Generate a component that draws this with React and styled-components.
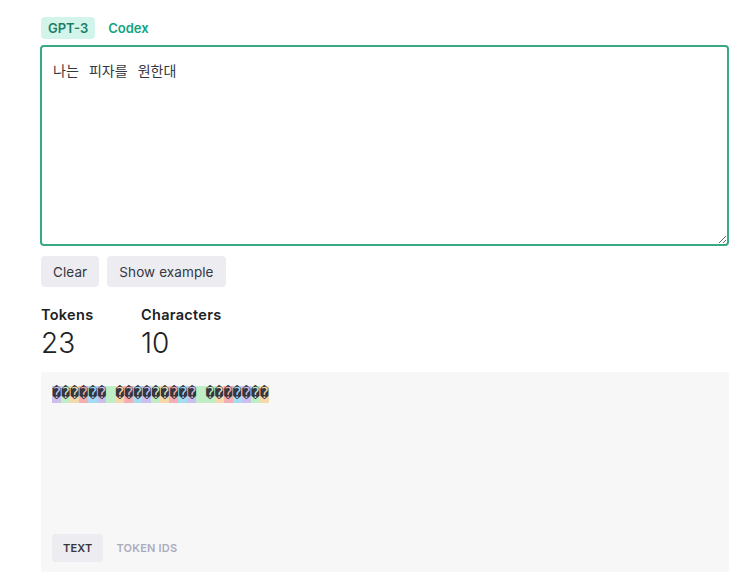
import React from "react";
import styled, { createGlobalStyle } from "styled-components";

const COLORS = {
  green: "#10a37f",
  greenTint: "#d2f4ea",
  text: "#353740",
  muted: "#acacbe",
  gray: "#ececf1",
  panel: "#f7f7f8",
};

const TOKEN_COLORS = [
  "rgba(107, 64, 216, 0.3)",
  "rgba(104, 222, 122, 0.4)",
  "rgba(244, 172, 54, 0.4)",
  "rgba(239, 65, 70, 0.4)",
  "rgba(39, 181, 234, 0.4)",
];

const R = "\uFFFD";
const TOKENS = [
  R, R, R, R, R, R, " ",
  R, R, R, R, R, R, R, R, R,
  " " + R, R, R, R, R, R, R,
];

const GlobalStyle = createGlobalStyle`
  body {
    margin: 0;
    background: #fff;
    font-family: Inter, "Noto Sans", sans-serif;
    color: ${COLORS.text};
  }
`;

const App = () => {
  return (
    <>
      <GlobalStyle />
      <Page>
        <Tabs>
          <ModelTab $active>GPT-3</ModelTab>
          <ModelTab>Codex</ModelTab>
        </Tabs>
        <Input defaultValue="나는 피자를 원한대" spellCheck={false} />
        <Actions>
          <Button>Clear</Button>
          <Button>Show example</Button>
        </Actions>
        <Stats>
          <Stat>
            <StatLabel>Tokens</StatLabel>
            <StatValue>23</StatValue>
          </Stat>
          <Stat>
            <StatLabel>Characters</StatLabel>
            <StatValue>10</StatValue>
          </Stat>
        </Stats>
        <Output>
          <TokenLine>
            {TOKENS.map((t, i) => (
              <Token key={i} $color={TOKEN_COLORS[i % TOKEN_COLORS.length]}>
                {t}
              </Token>
            ))}
          </TokenLine>
          <ViewTabs>
            <ViewTab $active>Text</ViewTab>
            <ViewTab>Token IDs</ViewTab>
          </ViewTabs>
        </Output>
      </Page>
    </>
  );
};

const Page = styled.div`
  width: 689px;
  margin-left: 40px;
  padding-top: 17px;
  display: flex;
  flex-direction: column;
`;

const Tabs = styled.div`
  display: flex;
  gap: 6px;
  margin-left: 1px;
  margin-bottom: 6px;
`;

const ModelTab = styled.button`
  border: none;
  border-radius: 4px;
  padding: 0 7px;
  height: 22px;
  font-family: Inter, sans-serif;
  font-size: 13px;
  font-weight: 600;
  color: ${(p) => (p.$active ? "#1a7f64" : COLORS.green)};
  background: ${(p) => (p.$active ? COLORS.greenTint : "transparent")};
  cursor: pointer;
`;

const Input = styled.textarea`
  box-sizing: border-box;
  width: 100%;
  height: 201px;
  margin: 0;
  padding: 12px 11px;
  border: 2px solid #3aa882;
  border-radius: 4px;
  outline: none;
  font-family: "Noto Sans CJK KR", sans-serif;
  font-size: 14px;
  line-height: 22px;
  word-spacing: 7px;
  color: ${COLORS.text};
  resize: vertical;
`;

const Actions = styled.div`
  display: flex;
  gap: 8px;
  margin: 10px 0 0 1px;
`;

const Button = styled.button`
  height: 31px;
  padding: 0 12px;
  border: none;
  border-radius: 4px;
  background: ${COLORS.gray};
  font-family: Inter, sans-serif;
  font-size: 13.5px;
  letter-spacing: 0.1px;
  color: ${COLORS.text};
  cursor: pointer;
`;

const Stats = styled.div`
  display: flex;
  margin: 19px 0 11px 1px;
`;

const Stat = styled.div`
  width: 100px;
  display: flex;
  flex-direction: column;
`;

const StatLabel = styled.div`
  font-size: 14.5px;
  font-weight: 600;
  letter-spacing: 0.3px;
  color: #202123;
  line-height: 18px;
`;

const StatValue = styled.div`
  font-size: 28px;
  font-weight: 300;
  color: #202123;
  line-height: 36px;
  margin-top: 1px;
`;

const Output = styled.div`
  box-sizing: border-box;
  width: 688px;
  height: 200px;
  margin-left: 1px;
  padding: 13px 11px 10px;
  background: ${COLORS.panel};
  border-radius: 2px;
  display: flex;
  flex-direction: column;
  justify-content: space-between;
`;

const TokenLine = styled.div`
  font-family: "Liberation Mono", "DejaVu Sans Mono", monospace;
  font-size: 15px;
  line-height: 20px;
  color: #353740;
  white-space: pre;
`;

const Token = styled.span`
  background: ${(p) => p.$color};
`;

const ViewTabs = styled.div`
  display: flex;
  gap: 2px;
`;

const ViewTab = styled.button`
  height: 28px;
  padding: 0 11px;
  border: none;
  border-radius: 4px;
  background: ${(p) => (p.$active ? COLORS.gray : "transparent")};
  color: ${(p) => (p.$active ? COLORS.text : COLORS.muted)};
  font-family: Inter, sans-serif;
  font-size: 11px;
  font-weight: 600;
  text-transform: uppercase;
  letter-spacing: 0.2px;
  cursor: pointer;
`;

export default App;
